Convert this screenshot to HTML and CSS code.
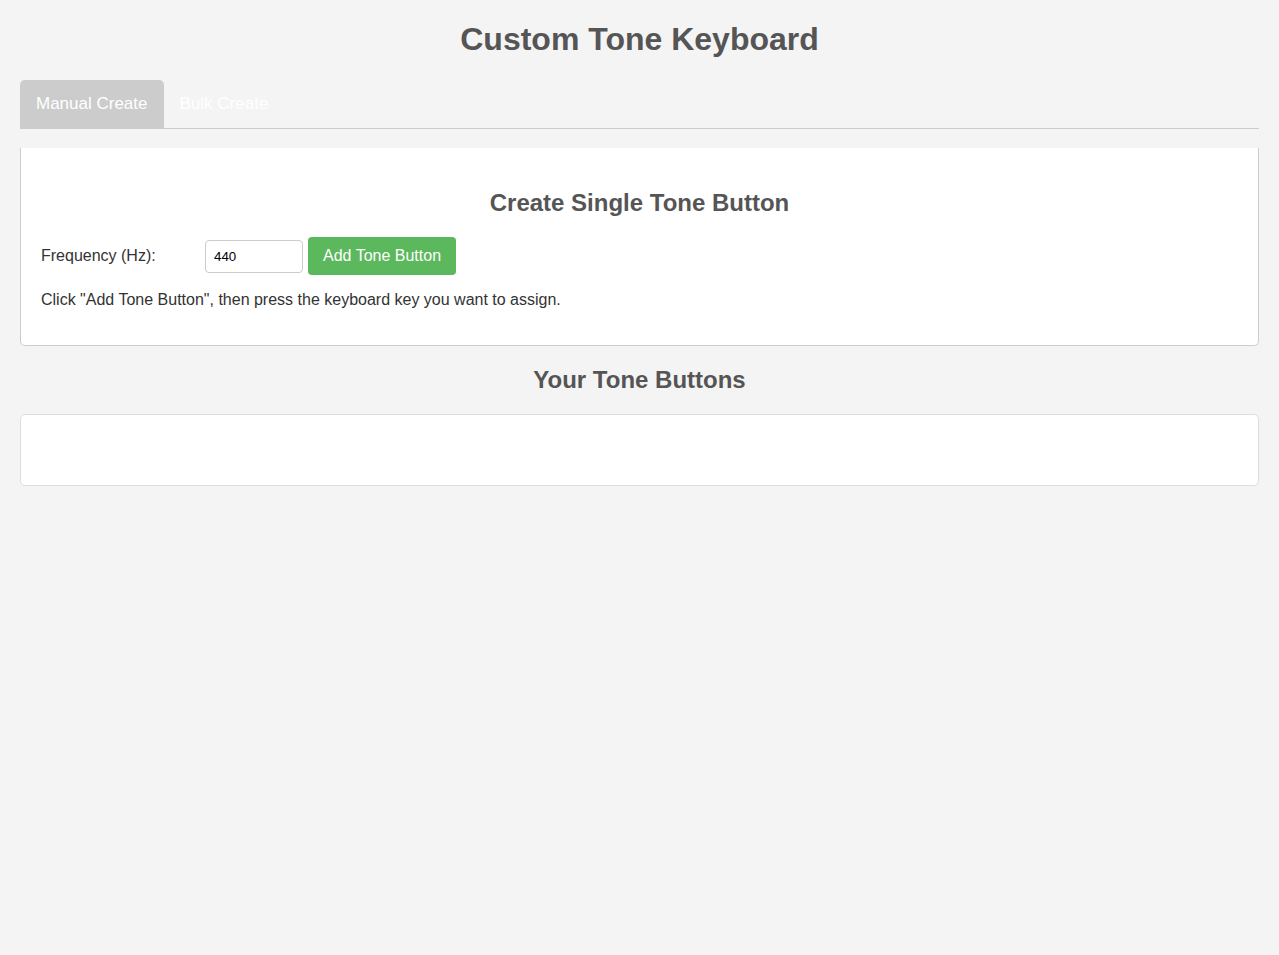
FILE: index.html
```html
<!DOCTYPE html>
<html lang="en">
<head>
<meta charset="utf-8">
<title>Custom Tone Keyboard</title>
<link rel="stylesheet" href="styles.css">
</head>
<body>
  <h1 class="title">Custom Tone Keyboard</h1>
  <div class="tabs">
    <button class="tab active">Manual Create</button>
    <button class="tab">Bulk Create</button>
  </div>
  <div class="panel">
    <h2 class="section-title">Create Single Tone Button</h2>
    <div class="form-row">
      <label class="label" for="freq">Frequency (Hz):</label>
      <input class="input" id="freq" type="number" value="440">
      <button class="btn">Add Tone Button</button>
    </div>
    <p class="hint">Click "Add Tone Button", then press the keyboard key you want to assign.</p>
  </div>
  <h2 class="section-title">Your Tone Buttons</h2>
  <div class="tone-list"></div>
</body>
</html>
```

FILE: styles.css
```css
html, body {
  margin: 0;
  padding: 0;
}
body {
  background: #f4f4f4;
  font-family: "Liberation Sans", Arial, sans-serif;
  color: #333;
  padding: 20px;
}
.title {
  margin: 0 0 22px;
  padding-top: 1px;
  text-align: center;
  font-size: 32px;
  line-height: 37px;
  color: #555;
}
.tabs {
  display: flex;
  border-bottom: 1px solid #ccc;
}
.tab {
  font-family: inherit;
  font-size: 17px;
  line-height: 20px;
  padding: 14px 16px;
  border: none;
  border-radius: 5px 5px 0 0;
  background: transparent;
  color: #fff;
}
.tab.active {
  background: #ccc;
}
.panel {
  margin-top: 19px;
  background: #fff;
  border: 1px solid #ccc;
  border-top: none;
  border-radius: 0 0 5px 5px;
  padding: 21px 20px 20px;
}
.section-title {
  margin: 20px 0;
  text-align: center;
  font-size: 24px;
  line-height: 28px;
  color: #555;
}
.form-row {
  display: flex;
  align-items: center;
}
.label {
  width: 164px;
  font-size: 16px;
}
.input {
  width: 80px;
  padding: 8px;
  border: 1px solid #ccc;
  border-radius: 4px;
  font-family: inherit;
  font-size: 13.33px;
  line-height: 15px;
  margin-right: 5px;
  -moz-appearance: textfield;
}
.input::-webkit-outer-spin-button,
.input::-webkit-inner-spin-button {
  -webkit-appearance: none;
  margin: 0;
}
.btn {
  font-family: inherit;
  font-size: 16px;
  line-height: 18px;
  padding: 10px 15px;
  border: none;
  border-radius: 4px;
  background: #5cb85c;
  color: #fff;
}
.hint {
  margin: 16px 0;
  font-size: 16px;
  line-height: 18px;
}
.tone-list {
  background: #fff;
  border: 1px solid #ddd;
  border-radius: 5px;
  height: 70px;
}
```
